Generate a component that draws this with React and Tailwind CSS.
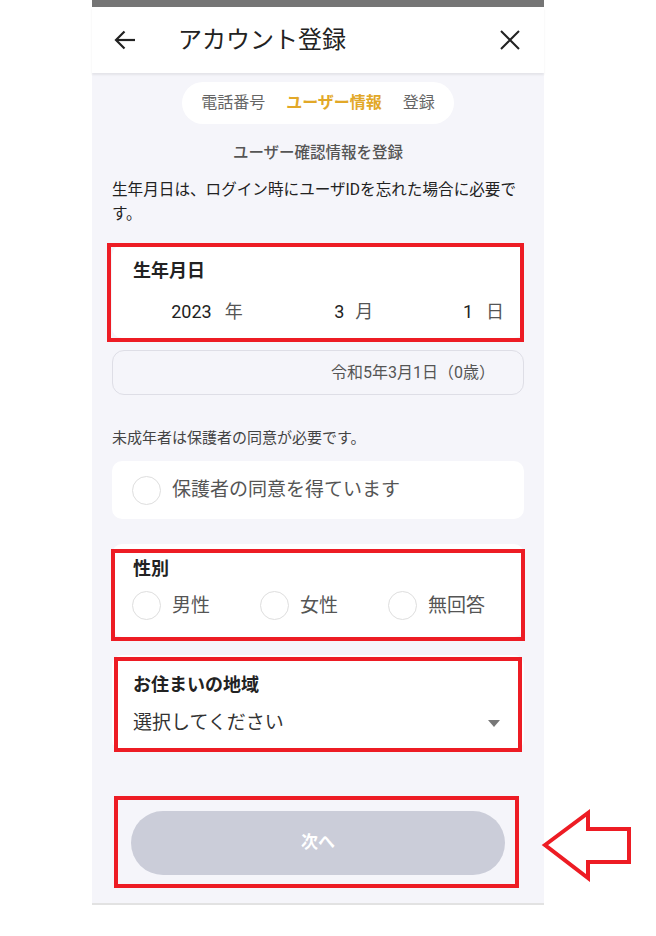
import { ChevronDown } from 'lucide-react';

const RED = 'border-[#ed1c24]';

const Radio = ({ label }) => (
    <div className="flex items-center gap-[11px]">
        <span className="w-[29px] h-[29px] rounded-full border border-[#dedede] bg-white shrink-0"></span>
        <span className="text-[19px] leading-6 text-[#555]">{label}</span>
    </div>
);

const App = () => {
    return (
        <div className="relative w-[656px] h-[936px] bg-white font-['Roboto','Noto_Sans_CJK_JP',sans-serif]">
            <div className="ml-[92px] w-[452px] flex flex-col">
                <div className="h-[7px] bg-[#757575]"></div>

                {/* header */}
                <div className="relative z-10 h-[66px] bg-white flex items-center justify-between pl-[22px] pr-[24px] shadow-[0_2px_2px_rgba(0,0,0,0.07)]">
                    <div className="flex items-center gap-[42px]">
                        <svg width="22" height="20" viewBox="0 0 22 20" fill="none" stroke="#222" strokeWidth="2.2">
                            <path d="M21 10H2" />
                            <path d="M10.5 1.5L2 10l8.5 8.5" />
                        </svg>
                        <h1 className="text-[24px] leading-8 text-[#222]">アカウント登録</h1>
                    </div>
                    <svg width="20" height="20" viewBox="0 0 20 20" fill="none" stroke="#222" strokeWidth="2">
                        <path d="M1 1l18 18M19 1L1 19" />
                    </svg>
                </div>

                {/* body */}
                <div className="h-[832px] bg-[#f5f5fa] border-b-2 border-[#e2e2e2] px-5 flex flex-col">
                    <div className="mt-[9px] self-center h-[42px] px-[19px] rounded-full bg-white flex items-center gap-[21px] text-[16px]">
                        <span className="text-[#666]">電話番号</span>
                        <span className="text-[#e2a828] font-bold">ユーザー情報</span>
                        <span className="text-[#666]">登録</span>
                    </div>

                    <p className="mt-[18px] text-center text-[15.5px] leading-[22px] font-medium text-[#555]">
                        ユーザー確認情報を登録
                    </p>

                    <p className="mt-[14px] text-[15.6px] leading-6 text-[#222]">
                        生年月日は、ログイン時にユーザIDを忘れた場合に必要です。
                    </p>

                    {/* birthday */}
                    <div className="mt-[19px] bg-white rounded-[10px] pt-[14px] pb-[14px]">
                        <p className="pl-[21px] text-[18px] leading-6 font-bold text-[#222]">生年月日</p>
                        <div className="mt-[17px] grid grid-cols-3 pr-5 text-[18px] leading-6 text-right">
                            <span><span className="text-[#222]">2023</span><span className="text-[#555] ml-[13px]">年</span></span>
                            <span><span className="text-[#222]">3</span><span className="text-[#555] ml-[11px]">月</span></span>
                            <span><span className="text-[#222]">1</span><span className="text-[#555] ml-[13px]">日</span></span>
                        </div>
                    </div>

                    <div className="mt-3 h-[45px] rounded-[12px] border border-[#dedee6] flex items-center justify-end pr-[28px] text-[16px] text-[#555]">
                        令和5年3月1日（0歳）
                    </div>

                    <p className="mt-8 text-[15px] leading-[22px] text-[#444]">未成年者は保護者の同意が必要です。</p>

                    <div className="mt-3 h-[58px] bg-white rounded-[10px] flex items-center pl-5">
                        <Radio label="保護者の同意を得ています" />
                    </div>

                    {/* gender */}
                    <div className="mt-[25px] bg-white rounded-[10px] pt-[13px] pb-[17px] pl-5">
                        <p className="pl-[1px] text-[18px] leading-6 font-bold text-[#222]">性別</p>
                        <div className="mt-[10px] grid grid-cols-[128px_128px_1fr]">
                            <Radio label="男性" />
                            <Radio label="女性" />
                            <Radio label="無回答" />
                        </div>
                    </div>

                    {/* region */}
                    <div className="mt-[18px] bg-white rounded-[10px] pt-[18px] pb-[15px] pl-[21px] pr-[24px]">
                        <p className="text-[18px] leading-6 font-bold text-[#222]">お住まいの地域</p>
                        <div className="mt-[14px] flex items-center justify-between">
                            <span className="text-[19px] leading-6 text-[#333]">選択してください</span>
                            <svg width="12" height="7" viewBox="0 0 12 7"><path d="M0 0h12L6 7z" fill="#777" /></svg>
                        </div>
                    </div>

                    <button className="mt-[61px] mx-[19px] h-[64px] rounded-full bg-[#cbcdd9] text-white text-[17px] font-bold">
                        次へ
                    </button>
                </div>
            </div>

            {/* annotations */}
            <div className={`absolute left-[107px] top-[243px] w-[417px] h-[99px] border-4 ${RED}`}></div>
            <div className={`absolute left-[111px] top-[549px] w-[414px] h-[92px] border-4 ${RED}`}></div>
            <div className={`absolute left-[114px] top-[657px] w-[408px] h-[95px] border-4 ${RED}`}></div>
            <div className={`absolute left-[114px] top-[796px] w-[405px] h-[92px] border-4 ${RED}`}></div>
            <svg className="absolute left-[540px] top-[808px]" width="94" height="74" viewBox="0 0 94 74" fill="none">
                <path d="M5 37L48 5v16h41v33H48v16z" stroke="#ed1c24" strokeWidth="4" strokeLinejoin="miter" />
            </svg>
        </div>
    );
};

export default App;
